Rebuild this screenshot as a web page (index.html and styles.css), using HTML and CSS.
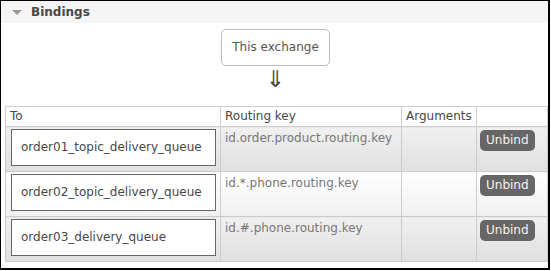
FILE: index.html
```html
<!DOCTYPE html>
<html>
<head>
<meta charset="utf-8">
<link rel="stylesheet" href="styles.css">
</head>
<body>
<div class="section">
  <div class="section-head"><span class="tri"></span><span class="title">Bindings</span></div>
  <div class="section-body">
    <div class="exchange-wrap">
      <div class="exchange">This exchange</div>
      <div class="arrow">⇓</div>
    </div>
    <table class="bindings">
      <colgroup>
        <col class="c-to"><col class="c-key"><col class="c-args"><col class="c-act">
      </colgroup>
      <thead>
        <tr><th>To</th><th>Routing key</th><th>Arguments</th><th></th></tr>
      </thead>
      <tbody>
        <tr class="alt1">
          <td><span class="queue">order01_topic_delivery_queue</span></td>
          <td class="key">id.order.product.routing.key</td>
          <td></td>
          <td><span class="btn">Unbind</span></td>
        </tr>
        <tr class="alt2">
          <td><span class="queue">order02_topic_delivery_queue</span></td>
          <td class="key">id.*.phone.routing.key</td>
          <td></td>
          <td><span class="btn">Unbind</span></td>
        </tr>
        <tr class="alt1">
          <td><span class="queue">order03_delivery_queue</span></td>
          <td class="key">id.#.phone.routing.key</td>
          <td></td>
          <td><span class="btn">Unbind</span></td>
        </tr>
      </tbody>
    </table>
  </div>
</div>
</body>
</html>
```
FILE: styles.css
```css
html, body {
  margin: 0;
  padding: 0;
  background: #fff;
}
body {
  font-family: "DejaVu Sans", Verdana, sans-serif;
  font-size: 12px;
  color: #484848;
}
.section {
  width: 547px;
  height: 267px;
  border: 1px solid #000;
  border-right-width: 2px;
  border-bottom-width: 2px;
  overflow: hidden;
}
.section-head {
  height: 22px;
  background: #f5f5f5;
  display: flex;
  align-items: center;
  padding-left: 11px;
}
.tri {
  width: 0;
  height: 0;
  border-left: 5px solid transparent;
  border-right: 5px solid transparent;
  border-top: 5px solid #999;
  margin-right: 9px;
}
.title {
  font-weight: bold;
  font-size: 12px;
  color: #484848;
}
.section-body {
  padding: 6px 2px 0 4px;
}
.exchange-wrap {
  display: flex;
  flex-direction: column;
  align-items: center;
  height: 77px;
}
.exchange {
  box-sizing: border-box;
  width: 109px;
  height: 37px;
  border: 1px solid #bbb;
  border-radius: 5px;
  line-height: 35px;
  text-align: center;
  color: #555;
}
.arrow {
  font-size: 23px;
  line-height: 26px;
  color: #444;
  margin-top: 0;
}
.bindings {
  border-collapse: collapse;
  table-layout: fixed;
  width: 542px;
}
.c-to { width: 215px; }
.c-key { width: 181px; }
.c-args { width: 75px; }
.c-act { width: 71px; }
.bindings th, .bindings td {
  border: 1px solid #ccc;
  text-align: left;
  vertical-align: top;
  padding: 0 4px;
}
.bindings th {
  font-weight: normal;
  height: 19px;
  line-height: 19px;
  color: #484848;
}
.bindings td {
  height: 42px;
  padding-top: 2px;
  padding-bottom: 0;
}
.bindings td:first-child {
  padding-left: 5px;
  padding-right: 4px;
}
.alt1 td {
  background: linear-gradient(#f0f0f0, #e0e0e0);
}
.alt2 td {
  background: linear-gradient(#ffffff, #f0f0f0);
}
.key {
  color: #777;
  line-height: 14px;
  padding-top: 4px !important;
  height: 40px !important;
}
.queue {
  display: block;
  box-sizing: border-box;
  width: 205px;
  height: 37px;
  border: 1px solid #666;
  background: #fff;
  line-height: 35px;
  padding-left: 9px;
  color: #484848;
  white-space: nowrap;
}
.btn {
  display: inline-block;
  margin-left: -1px;
  margin-top: 1px;
  height: 21px;
  line-height: 21px;
  padding: 0 6px;
  background: #666;
  color: #f4f4f4;
  border-radius: 5px;
}
```
